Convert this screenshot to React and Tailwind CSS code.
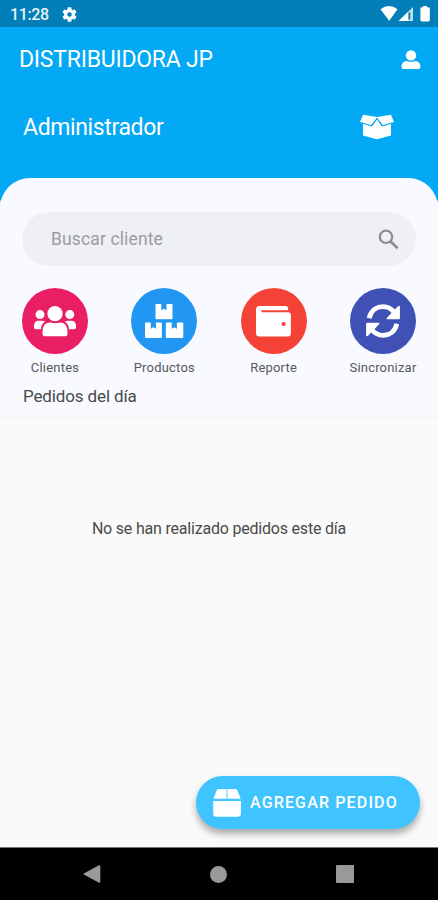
import React from "react";

function GearIcon() {
  return (
    <svg className="h-[15px] w-[15px]" viewBox="2 2 20 20" fill="white">
      <path d="M19.14 12.94c.04-.3.06-.61.06-.94 0-.32-.02-.64-.07-.94l2.03-1.58c.18-.14.23-.41.12-.61l-1.92-3.32c-.12-.22-.37-.29-.59-.22l-2.39.96c-.5-.38-1.03-.7-1.62-.94l-.36-2.54c-.04-.24-.24-.41-.48-.41h-3.84c-.24 0-.43.17-.47.41l-.36 2.54c-.59.24-1.13.57-1.62.94l-2.39-.96c-.22-.08-.47 0-.59.22L2.74 8.87c-.12.21-.08.47.12.61l2.03 1.58c-.05.3-.09.63-.09.94s.02.64.07.94l-2.03 1.58c-.18.14-.23.41-.12.61l1.92 3.32c.12.22.37.29.59.22l2.39-.96c.5.38 1.03.7 1.62.94l.36 2.54c.05.24.24.41.48.41h3.84c.24 0 .44-.17.47-.41l.36-2.54c.59-.24 1.13-.56 1.62-.94l2.39.96c.22.08.47 0 .59-.22l1.92-3.32c.12-.22.07-.47-.12-.61l-2.01-1.58zM12 15a3 3 0 1 1 0-6 3 3 0 0 1 0 6z" />
    </svg>
  );
}

function StatusIcons() {
  return (
    <svg className="h-[16px] w-[50px]" viewBox="380 6 50 16" fill="white">
      <path d="M380.5 9.3Q389 2.800 397.500 9.3L389.2 20.7z" />
      <path d="M413 7V21H398.600z" opacity=".75" />
      <path d="M408 11.900V21H398.600z" />
      <path d="M408.500 12.500h1.800v7H408.500z" fill="#027fb8" />
      <path d="M423 6h4v1.300h1.600q1.200 0 1.200 1.200v11.600q0 1.400-1.400 1.400h-6.600q-1.400 0-1.400-1.400V8.500q0-1.200 1.200-1.200H423z" />
    </svg>
  );
}

function PersonIcon() {
  return (
    <svg className="h-[20px] w-[20px]" viewBox="401.500 49 20 20" fill="white">
      <circle cx="411.500" cy="54.400" r="5.200" />
      <path d="M402 65.800q0-5.600 5.400-5.900 4.100 1.900 8.200 0 5.400.3 5.400 5.900 0 2.200-2 2.200h-15q-2 0-2-2.200z" />
    </svg>
  );
}

function OpenBoxIcon() {
  return (
    <svg className="h-[26px] w-[34px]" viewBox="360 114 34 26" fill="white">
      <path d="M363 114.700 377 117 391 114.700 394 122 383 125.200 377 118 371 125.200 360 122z" />
      <path d="M363 123.500 372.200 126.300 377 119.500 381.800 126.300 391 123.500V135.500L377 139.200 363 135.500z" />
      <path d="M361.500 123 371.700 126 377 118.300 382.300 126 392.500 123" stroke="#03a9f4" strokeWidth=".9" fill="none" />
    </svg>
  );
}

function UsersIcon() {
  return (
    <svg className="h-[66px] w-[66px]" viewBox="22 288 66 66" fill="white">
      <circle cx="40" cy="314.600" r="4.500" />
      <circle cx="69.800" cy="314.600" r="4.500" />
      <path d="M34 326q0-5.200 5-5.200h3.200q1.800 0 3 1-4 2.400-4.200 7.400h-5Q34 329.200 34 327.500z" />
      <path d="M76 326q0-5.200-5-5.200h-3.200q-1.800 0-3 1 4 2.400 4.200 7.400h5q2 0 2-1.700z" />
      <circle cx="55" cy="313.700" r="7.600" />
      <path d="M42.500 332q0-9.400 8-9.400 4.500 1.500 9 0 8 0 8 9.400v1.400q0 2.900-2.900 2.900H45.400q-2.900 0-2.900-2.900z" />
    </svg>
  );
}

function BoxesIcon() {
  return (
    <svg className="h-[66px] w-[66px]" viewBox="131 288 66 66" fill="white">
      <path d="M156.500 304H161.300v6.200l2.600-1.500 2.600 1.500V304h5q1 0 1 1v13.200q0 1-1 1h-15q-1 0-1-1V305q0-1 1-1z" />
      <path d="M146 322.600h4.700v6.200l2.600-1.500 2.600 1.500v-6.200h5q1 0 1 1v13.500q0 1-1 1H146q-1 0-1-1v-13.500q0-1 1-1z" />
      <path d="M166.800 322.600h4.900v6.200l2.600-1.500 2.600 1.500v-6.200h5.400q1 0 1 1v13.500q0 1-1 1h-15.500q-1 0-1-1v-13.500q0-1 1-1z" />
    </svg>
  );
}

function WalletIcon() {
  return (
    <svg className="h-[66px] w-[66px]" viewBox="241 288 66 66" fill="white">
      <path d="M259.500 306h26q2.700 0 2.700 3v1.200H262.500q-1.200 0-1.200 1t1.200 1H288q2.900 0 2.900 3v18.100q0 3.200-3.200 3.200h-28.200q-3.500 0-3.500-3.500V309.500q0-3.500 3.500-3.500z" />
      <circle cx="283.600" cy="324" r="2.100" fill="#f44336" />
    </svg>
  );
}

function SyncIcon() {
  return (
    <svg className="h-[66px] w-[66px]" viewBox="350 288 66 66" fill="none">
      <path d="M369.200 318.300C371 309.600 377.500 306.700 383 306.700c4.700 0 8.200 2 11 5.300" stroke="white" strokeWidth="4.800" />
      <path d="M399.900 306.800v11.400q0 1-1 1h-11.700q-1.300-.2-.5-1.300l11.500-11.800q1.500-.9 1.700.7z" fill="white" />
      <path d="M396.800 323.700C395 332.400 388.500 335.300 383 335.300c-4.700 0-8.200-2-11-5.300" stroke="white" strokeWidth="4.800" />
      <path d="M366.100 335.200v-11.400q0-1 1-1h11.700q1.300.2.500 1.300l-11.500 11.800q-1.500.9-1.700-.7z" fill="white" />
    </svg>
  );
}

function PackageIcon() {
  return (
    <svg className="h-[28px] w-[28px]" viewBox="213.500 790 28 28" fill="white">
      <path d="M219.200 790H226.500v9.700H213.900l3.200-8.300q.5-1.400 2.100-1.400zM228.500 790h7.400q1.500 0 2 1.400l3.300 8.300H228.500z" />
      <path d="M226 790h3v9.700h-3z" opacity=".55" />
      <path d="M213.700 801.900h27.700v12.800q0 3-3 3h-21.700q-3 0-3-3z" />
    </svg>
  );
}

const actions = [
  { label: "Clientes", color: "bg-[#e91e63]", Icon: UsersIcon },
  { label: "Productos", color: "bg-[#2196f3]", Icon: BoxesIcon },
  { label: "Reporte", color: "bg-[#f44336]", Icon: WalletIcon },
  { label: "Sincronizar", color: "bg-[#3f51b5]", Icon: SyncIcon },
];

export default function App() {
  return (
    <div className="flex h-[900px] w-[438px] flex-col overflow-hidden bg-[#fafafa] font-[Roboto,sans-serif]">
      <div className="flex h-[27px] shrink-0 items-center justify-between bg-[#027fb8] pl-[10px] pr-2 text-white">
        <div className="flex items-center gap-[13px] pt-[2px]">
          <span className="text-[16px] font-medium leading-5 tracking-[-0.35px] text-white/90">11:28</span>
          <GearIcon />
        </div>
        <StatusIcons />
      </div>

      <header className="flex h-[151px] shrink-0 flex-col bg-[#03a9f4] text-white">
        <div className="flex h-[65px] items-center justify-between pl-[19px] pr-[17px]">
          <h1 className="text-[23px] leading-7 tracking-[-0.25px]">DISTRIBUIDORA JP</h1>
          <PersonIcon />
        </div>
        <div className="flex h-[70px] items-center justify-between pl-[23px] pr-[44px]">
          <h2 className="pt-px text-[23px] leading-7 tracking-[-0.37px]">Administrador</h2>
          <OpenBoxIcon />
        </div>
      </header>

      <div className="shrink-0 bg-[linear-gradient(#03a9f4_22px,#d5e0fb_23px,#f8faff_30px)]">
        <section className="h-[240px] rounded-t-[30px] border-b border-[#f1f2f4] bg-[#f8faff] px-[22px] pt-[34px]">
          <div className="flex h-[54px] items-center justify-between rounded-full bg-[#eff0f4] pl-[29px] pr-[17px]">
            <span className="text-[17.5px] leading-6 tracking-[0.13px] text-[#9b9ca0]">Buscar cliente</span>
            <svg className="h-[21px] w-[21px]" viewBox="0 0 21 21" fill="none" stroke="#8b8c90">
              <circle cx="8" cy="7.800" r="6.200" strokeWidth="2.200" />
              <path d="M12.600 12.400 19.600 19.200" strokeWidth="2.800" />
            </svg>
          </div>
          <div className="mt-[22px] flex justify-between">
            {actions.map(({ label, color, Icon }) => (
              <div key={label} className="flex w-[66px] flex-col items-center">
                <div className={`h-[66px] w-[66px] rounded-full ${color}`}>
                  <Icon />
                </div>
                <span className="mt-[6px] whitespace-nowrap text-[13px] leading-4 tracking-[0.2px] text-[#57585a]">
                  {label}
                </span>
              </div>
            ))}
          </div>
          <p className="ml-px mt-[10px] text-[17px] leading-5 tracking-[-0.13px] text-[#48494b]">Pedidos del día</p>
        </section>
      </div>

      <main className="flex flex-1 flex-col justify-between bg-[#fafafa]">
        <p className="mt-[101px] text-center text-[16px] leading-5 tracking-[-0.2px] text-[#4a4a4a]">
          No se han realizado pedidos este día
        </p>
        <button className="mb-[18px] mr-[18px] flex h-[53px] w-[224px] items-center gap-[9px] self-end rounded-full bg-[#40c4ff] pl-[17px] text-white shadow-[0_5px_7px_rgba(0,0,0,0.32)]">
          <PackageIcon />
          <span className="whitespace-nowrap text-[16px] font-medium leading-5 tracking-[1.15px]">AGREGAR PEDIDO</span>
        </button>
      </main>

      <nav className="flex h-[53px] shrink-0 items-center justify-between border-t border-[#777777] bg-black pl-[83px] pr-[84px]">
        <svg className="h-[18px] w-[18px]" viewBox="0 0 18 18" fill="#999999">
          <path d="M.8 8.400Q.1 9 .8 9.600L16 17.700q1.300.5 1.300-.8V1.100Q17.300-.2 16 .3z" />
        </svg>
        <div className="h-[17px] w-[17px] rounded-full bg-[#999999]" />
        <div className="h-[18px] w-[18px] rounded-[1px] bg-[#999999]" />
      </nav>
    </div>
  );
}
